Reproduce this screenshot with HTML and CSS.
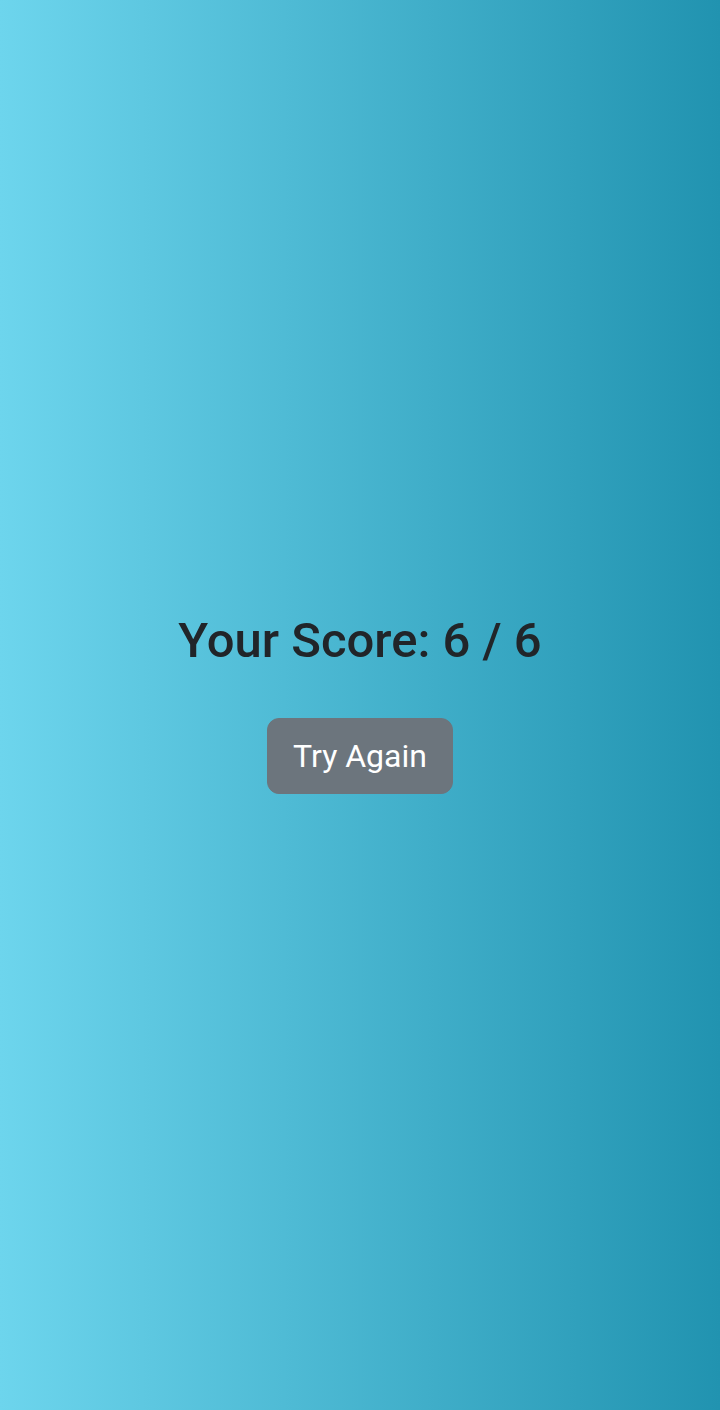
FILE: index.html
```html
<!DOCTYPE html>
<html lang="en">
<head>
<meta charset="utf-8">
<title>Quiz Result</title>
<link rel="stylesheet" href="styles.css">
</head>
<body>
<main class="result">
  <h1 class="score">Your Score: 6 / 6</h1>
  <button class="btn-retry" type="button">Try Again</button>
</main>
</body>
</html>
```
FILE: styles.css
```css
html, body {
  margin: 0;
  padding: 0;
  height: 100%;
}
body {
  background: linear-gradient(to right, #6dd5ed, #2193b0);
  font-family: Roboto, "Noto Sans", "Liberation Sans", sans-serif;
  color: #212529;
}
.result {
  min-height: 100vh;
  box-sizing: border-box;
  padding-bottom: 4px;
  display: flex;
  flex-direction: column;
  align-items: center;
  justify-content: center;
}
.score {
  margin: 0 0 48px 0;
  font-size: 49px;
  font-weight: 500;
  line-height: 1.2;
}
.btn-retry {
  font-family: inherit;
  font-size: 32px;
  font-weight: 400;
  line-height: 45px;
  color: #fff;
  background: #6c757d;
  border: 1.5px solid #6c757d;
  border-radius: 12px;
  padding: 14px 0;
  width: 186px;
  height: 76px;
  box-sizing: border-box;
  cursor: pointer;
}
```
